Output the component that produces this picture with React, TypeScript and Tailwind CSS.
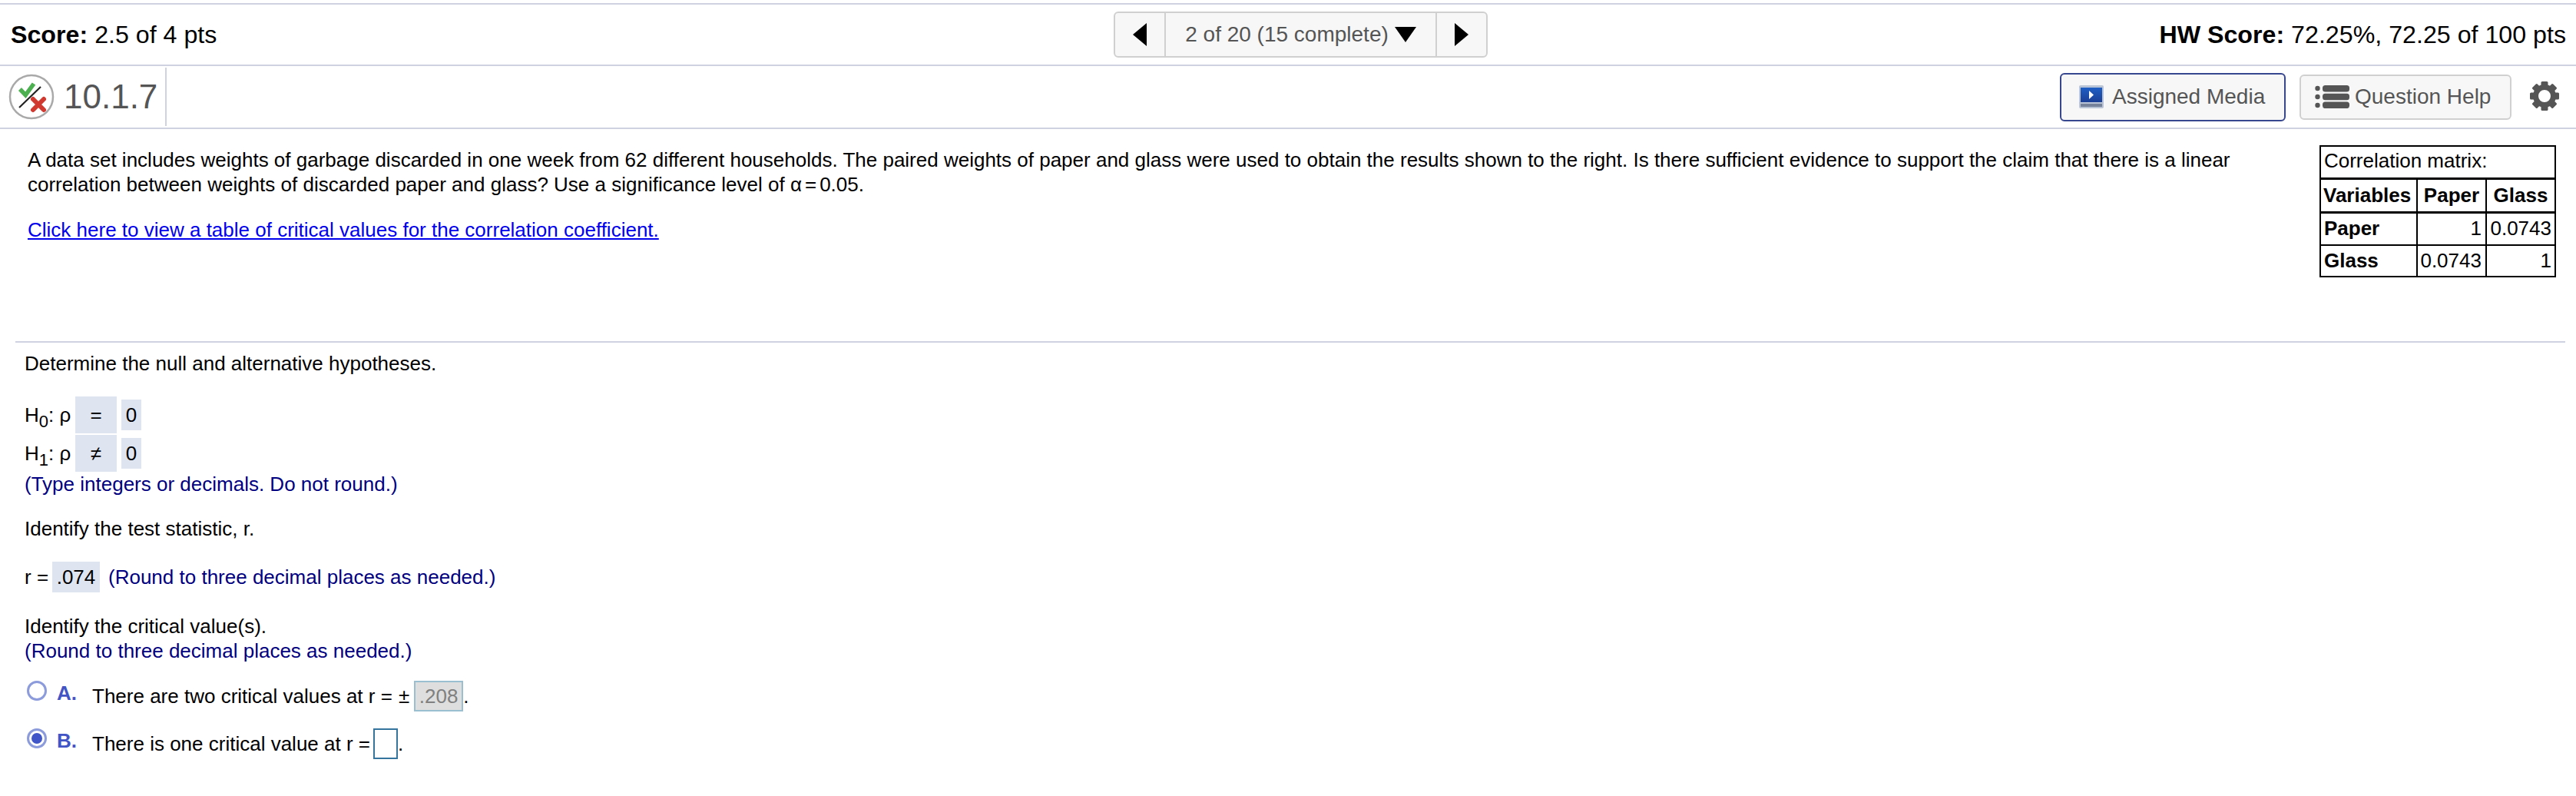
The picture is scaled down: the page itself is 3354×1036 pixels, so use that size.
import React from "react";

function Tri({ dir }: { dir: "l" | "r" | "d" }) {
  const pts = dir === "l" ? "18,0 18,30 0,15" : dir === "r" ? "0,0 18,15 0,30" : "0,0 28,0 14,20";
  const w = dir === "d" ? 28 : 18;
  const h = dir === "d" ? 20 : 30;
  return (
    <svg width={w} height={h} viewBox={`0 0 ${w} ${h}`} className="block shrink-0">
      <polygon points={pts} fill="#000" />
    </svg>
  );
}

function StatusIcon() {
  return (
    <svg width="60" height="60" viewBox="0 0 60 60" className="block shrink-0">
      <circle cx="30" cy="30" r="28" fill="#fff" stroke="#a9a9a9" strokeWidth="2.5" />
      <polyline points="15,20 22.3,27.7 33,13" fill="none" stroke="#4caf50" strokeWidth="5.5" />
      <line x1="14" y1="44" x2="42" y2="17" stroke="#222" strokeWidth="2.2" />
      <path d="M32 33 L46 47 M46 33 L32 47" stroke="#d0392f" strokeWidth="6" strokeLinecap="round" />
    </svg>
  );
}

function MediaIcon() {
  return (
    <svg width="32" height="30" viewBox="0 0 32 30" className="block shrink-0">
      <defs>
        <linearGradient id="b" x1="0" y1="0" x2="0" y2="1">
          <stop offset="0" stopColor="#1f5fc4" />
          <stop offset="1" stopColor="#1c3f96" />
        </linearGradient>
      </defs>
      <rect x="0" y="0" width="32" height="30" rx="2" fill="#b9c4d6" />
      <rect x="2" y="3" width="28" height="19" fill="url(#b)" />
      <polygon points="13,7 19,12.5 13,18" fill="#fff" />
      <rect x="2" y="24" width="28" height="4" fill="#77839a" />
    </svg>
  );
}

function ListIcon() {
  return (
    <svg width="45" height="30" viewBox="0 0 45 30" className="block shrink-0">
      <g fill="#555">
        <circle cx="3.5" cy="4" r="3.2" />
        <circle cx="3.5" cy="15" r="3.2" />
        <circle cx="3.5" cy="26" r="3.2" />
        <rect x="10" y="0" width="35" height="8.5" rx="3.5" />
        <rect x="10" y="10.8" width="35" height="8.5" rx="3.5" />
        <rect x="10" y="21.6" width="35" height="8.5" rx="3.5" />
      </g>
    </svg>
  );
}

function Gear() {
  const teeth = [0, 45, 90, 135, 180, 225, 270, 315];
  return (
    <svg width="40" height="40" viewBox="0 0 40 40" className="mb-[3px] ml-[23px] mr-[21px] block shrink-0">
      <g fill="#555">
        {teeth.map((a) => (
          <rect key={a} x="15.5" y="1" width="9" height="9" rx="1.5" transform={`rotate(${a} 20 20)`} />
        ))}
      </g>
      <circle cx="20" cy="20" r="11.5" fill="#fff" stroke="#555" strokeWidth="7" />
    </svg>
  );
}

function Radio({ on }: { on?: boolean }) {
  return (
    <span className="flex h-[26px] w-[26px] shrink-0 items-center justify-center rounded-full border-[3px] border-[#8c9bdc] bg-white">
      {on && <span className="block h-[14px] w-[14px] rounded-full bg-[#3f55c8]" />}
    </span>
  );
}

function Hyp({ n, sym }: { n: string; sym: string }) {
  return (
    <div className="flex h-[48px] items-center">
      <span className="w-[66px] whitespace-nowrap">
        H<span className="relative top-[7px] text-[22px] leading-none">{n}</span>: ρ
      </span>
      <span className="flex h-[48px] w-[54px] items-center justify-center bg-[#dee5f1]">{sym}</span>
      <span className="ml-[6px] flex h-[40px] w-[26px] items-center justify-center bg-[#dee5f1]">0</span>
    </div>
  );
}

export default function App() {
  return (
    <div className="min-h-[1036px] bg-white pt-[4px] text-black" style={{ fontFamily: '"Liberation Sans", Arial, sans-serif' }}>
      <header className="flex h-[82px] items-center border-y-2 border-[#cfd2e0] pl-[14px] pr-[13px] text-[32.2px]">
        <div className="w-[1436px] shrink-0">
          <b>Score:</b> 2.5 of 4 pts
        </div>
        <nav className="flex h-[60px] w-[487px] shrink-0 rounded-[6px] border-2 border-[#d0d0d0] bg-[#f7f7f7] text-[#555]">
          <span className="flex w-[66px] items-center justify-center border-r-2 border-[#d0d0d0]"><Tri dir="l" /></span>
          <span className="flex flex-1 items-center justify-center gap-[8px] text-[28px]">
            2 of 20 (15 complete) <Tri dir="d" />
          </span>
          <span className="flex w-[66px] items-center justify-center border-l-2 border-[#d0d0d0]"><Tri dir="r" /></span>
        </nav>
        <div className="ml-auto whitespace-nowrap">
          <b>HW Score:</b> 72.25%, 72.25 of 100 pts
        </div>
      </header>

      <div className="flex h-[82px] items-center border-b-2 border-[#cfd2e0]">
        <div className="flex h-[76px] w-[217px] items-center gap-[12px] border-r-2 border-[#cfd2e0] pl-[11px] text-[44px] leading-none text-[#555]">
          <StatusIcon />
          10.1.7
        </div>
        <button className="ml-auto flex h-[63px] w-[294px] items-center gap-[11px] rounded-[6px] border-2 border-[#37478f] bg-[#f7f7f7] pl-[23px] text-[28px] text-[#555]">
          <MediaIcon /> Assigned Media
        </button>
        <button className="ml-[18px] flex h-[59px] w-[276px] items-center gap-[7px] rounded-[6px] border-2 border-[#d0d0d0] bg-[#f7f7f7] pl-[18px] text-[28px] text-[#555]">
          <ListIcon /> Question Help
        </button>
        <Gear />
      </div>

      <section className="flex h-[276px] items-start justify-between pl-[36px] pr-[26px] text-[26px] leading-[32px]">
        <div className="w-[2940px] pt-[24px]">
          <p>
            A data set includes weights of garbage discarded in one week from 62 different households. The paired weights of paper and glass were used to obtain the results shown to the right. Is there sufficient evidence to support the claim that there is a linear correlation between weights of discarded paper and glass? Use a significance level of α<span className="mx-[4px]">=</span>0.05.
          </p>
          <a className="mt-[27px] block text-[#0000ee] underline">Click here to view a table of critical values for the correlation coefficient.</a>
        </div>
        <table className="mt-[21px] w-[306px] table-fixed border-collapse border-2 border-black leading-[30px]">
          <colgroup>
            <col className="w-[126px]" />
            <col className="w-[90px]" />
            <col className="w-[90px]" />
          </colgroup>
          <tbody>
            <tr className="h-[42px] border-b-[3px] border-black">
              <td colSpan={3} className="px-[4px] pb-[3px]">Correlation matrix:</td>
            </tr>
            <tr className="h-[44px] border-b-[3px] border-black font-bold">
              <td className="border-r-2 border-black pl-[3px]">Variables</td>
              <td className="border-r-2 border-black text-center">Paper</td>
              <td className="text-center">Glass</td>
            </tr>
            <tr className="h-[43px] border-b-2 border-black">
              <td className="border-r-2 border-black pb-[2px] pl-[4px] font-bold">Paper</td>
              <td className="border-r-2 border-black pb-[2px] pr-[5px] text-right">1</td>
              <td className="pb-[2px] pr-[4px] text-right">0.0743</td>
            </tr>
            <tr className="h-[41px]">
              <td className="border-r-2 border-black pb-[2px] pl-[4px] font-bold">Glass</td>
              <td className="border-r-2 border-black pb-[2px] pr-[5px] text-right">0.0743</td>
              <td className="pb-[2px] pr-[4px] text-right">1</td>
            </tr>
          </tbody>
        </table>
      </section>

      <main className="ml-[20px] mr-[14px] border-t-2 border-[#cfd2e0] pl-[12px] text-[26px] leading-[32px]">
        <p className="mt-[11px]">Determine the null and alternative hypotheses.</p>
        <div className="mt-[27px]">
          <Hyp n="0" sym="=" />
          <div className="mt-[2px]"><Hyp n="1" sym="≠" /></div>
        </div>
        <p className="text-[#000080]">(Type integers or decimals. Do not round.)</p>
        <p className="mt-[26px]">Identify the test statistic, r.</p>
        <div className="mt-[28px] flex h-[38px] items-center">
          <span className="w-[36px]">r =</span>
          <span className="flex h-[40px] w-[62px] items-center justify-center bg-[#dee5f1]">.074</span>
          <span className="ml-[11px] text-[#000080]">(Round to three decimal places as needed.)</span>
        </div>
        <p className="mt-[29px]">Identify the critical value(s).</p>
        <p className="text-[#000080]">(Round to three decimal places as needed.)</p>
        <div className="mt-[23px] flex items-start pl-[3px]">
          <Radio />
          <b className="ml-[13px] w-[46px] text-[#4355c5]">A.</b>
          <span className="flex h-[40px] items-center">
            There are two critical values at r = <span className="ml-[8px]">±</span>
            <span className="ml-[6px] flex h-[40px] w-[64px] items-center justify-center border-2 border-[#9abfd0] bg-[#dedede] text-[#808080]">.208</span>.
          </span>
        </div>
        <div className="mt-[22px] flex items-start pl-[3px]">
          <Radio on />
          <b className="ml-[13px] w-[46px] text-[#4355c5]">B.</b>
          <span className="flex h-[40px] items-center">
            There is one critical value at r =
            <span className="ml-[4px] h-[40px] w-[32px] border-2 border-[#35749c] bg-white" />.
          </span>
        </div>
      </main>
    </div>
  );
}
